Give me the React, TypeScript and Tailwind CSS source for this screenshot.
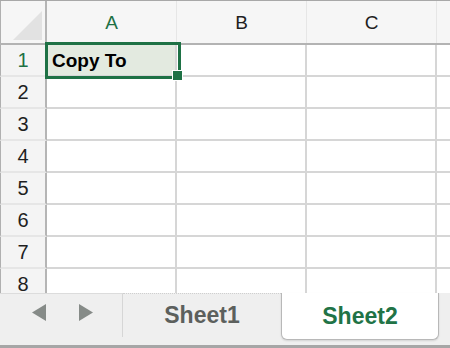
const cols = ['A', 'B', 'C']
const rows = [1, 2, 3, 4, 5, 6, 7, 8]

export default function App() {
  return (
    <div className="relative w-[450px] h-[348px] flex flex-col overflow-hidden bg-white font-['Liberation_Sans',Arial,sans-serif]">
      {/* column headers */}
      <div className="flex h-[45px] shrink-0 border-t border-[#a8a8a8] border-b-2 border-b-[#b3b3b3] bg-[#f6f6f6]">
        <div className="relative w-[47px] shrink-0 border-l border-[#b0b0b0] border-r-2 border-r-[#b5b5b5]">
          <svg className="absolute left-[10px] top-[8px]" width="32" height="32" viewBox="0 0 32 32">
            <polygon points="2,31 31,31 31,2" fill="#e2e2e2" />
          </svg>
        </div>
        {cols.map((c) => (
          <div
            key={c}
            className={`w-[130px] shrink-0 flex items-center justify-center pt-[2px] border-r border-[#e6e6e6] text-[19px] ${
              c === 'A' ? 'text-[#1e7145]' : 'text-[#1f1f1f]'
            }`}
          >
            {c}
          </div>
        ))}
        <div className="flex-1" />
      </div>

      {/* grid */}
      <div className="flex-1 overflow-hidden">
        {rows.map((r) => (
          <div key={r} className="flex h-[32px]">
            <div
              className={`w-[47px] shrink-0 flex items-center justify-center border-l border-[#b0b0b0] border-r-2 border-r-[#b5b5b5] border-b-2 border-b-[#e6e6e6] bg-[#f4f4f4] text-[20px] ${
                r === 1 ? 'text-[#1e7145]' : 'text-[#1f1f1f]'
              }`}
            >
              {r}
            </div>
            {cols.map((c) => (
              <div
                key={c}
                className={`w-[130px] shrink-0 flex items-center border-r-2 border-b-2 border-[#d6d6d6] ${
                  r === 1 && c === 'A' ? 'bg-[#e3eae0]' : ''
                }`}
              >
                {r === 1 && c === 'A' && (
                  <span className="pl-[5px] pt-[2px] text-[19px] font-bold text-black">Copy To</span>
                )}
              </div>
            ))}
            <div className="flex-1 border-b-2 border-[#d6d6d6]" />
          </div>
        ))}
      </div>

      {/* selection */}
      <div className="absolute left-[45px] top-[42px] w-[136px] h-[37px] border-[3px] border-[#1e7145]" />
      <div className="absolute left-[172px] top-[70px] w-[11px] h-[11px] bg-[#1e7145] border border-white" />

      {/* sheet tabs */}
      <div className="flex h-[55px] shrink-0 bg-[#efefef] border-b-[3px] border-[#a6a6a6]">
        <div className="w-[123px] shrink-0 flex items-center gap-[33px] pl-[32px] pb-[6px] border-r border-[#d6d6d6] border-t border-t-[#dcdcdc] mb-[8px]">
          <svg width="14" height="17" viewBox="0 0 14 17">
            <polygon points="14,0 14,17 0,8.5" fill="#868b88" />
          </svg>
          <svg width="14" height="17" viewBox="0 0 14 17">
            <polygon points="0,0 0,17 14,8.5" fill="#868b88" />
          </svg>
        </div>
        <div className="w-[158px] shrink-0 flex items-center justify-center pb-[8px] border-t border-dotted border-[#cfcfcf] text-[23px] font-bold text-[#5c605d]">
          Sheet1
        </div>
        <div className="w-[158px] h-[47px] shrink-0 flex items-center justify-center bg-white border-x border-b border-[#b8b8b8] rounded-b-[6px] shadow-[0_1px_2px_rgba(0,0,0,0.12)] text-[23px] font-bold text-[#217346]">
          Sheet2
        </div>
        <div className="flex-1" />
      </div>
    </div>
  )
}
